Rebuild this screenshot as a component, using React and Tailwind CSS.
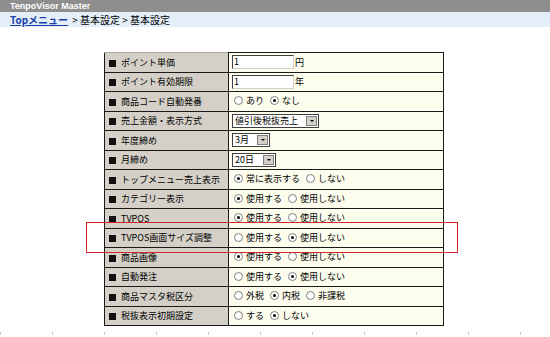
import React from "react";

const font = { fontFamily: '"MS PGothic", "Noto Sans CJK JP", sans-serif' };

function Radio({ checked, label }) {
  return (
    <span className="inline-flex items-center mr-[6px]">
      <span className="relative inline-block w-[9px] h-[9px] rounded-full border border-[#808080] bg-white mr-[3px]">
        {checked && (
          <span className="absolute left-[2px] top-[2px] w-[3px] h-[3px] rounded-full bg-black" />
        )}
      </span>
      <span>{label}</span>
    </span>
  );
}

function TextInput({ value, unit }) {
  return (
    <span className="inline-flex items-center">
      <span className="inline-block w-[62px] h-[14px] bg-white border-t border-l border-t-[#404040] border-l-[#404040] border-r border-b border-r-[#d4d0c8] border-b-[#d4d0c8] leading-[12px] pl-[1px]">
        {value}
      </span>
      <span className="ml-[1px]">{unit}</span>
    </span>
  );
}

function Select({ value, width }) {
  return (
    <span className={`inline-flex items-center h-[14px] bg-white border border-[#404040] ${width}`}>
      <span className="flex-1 pl-[2px] leading-[12px]">{value}</span>
      <span className="w-[11px] h-[10px] mr-[1px] bg-[#d4d0c8] border border-[#808080] flex items-center justify-center">
        <span className="w-0 h-0 border-l-[2px] border-r-[2px] border-t-[2px] border-l-transparent border-r-transparent border-t-black" />
      </span>
    </span>
  );
}

function Pair({ items }) {
  return (
    <span className="pl-[2px]">
      {items.map(([label, checked]) => (
        <Radio key={label} label={label} checked={checked} />
      ))}
    </span>
  );
}

const rows = [
  { label: "ポイント単価", value: <TextInput value="1" unit="円" /> },
  { label: "ポイント有効期限", value: <TextInput value="1" unit="年" /> },
  { label: "商品コード自動発番", value: <Pair items={[["あり", false], ["なし", true]]} /> },
  { label: "売上金額・表示方式", value: <Select value="値引後税抜売上" width="w-[87px]" /> },
  { label: "年度締め", value: <Select value="3月" width="w-[38px]" /> },
  { label: "月締め", value: <Select value="20日" width="w-[44px]" /> },
  { label: "トップメニュー売上表示", value: <Pair items={[["常に表示する", true], ["しない", false]]} /> },
  { label: "カテゴリー表示", value: <Pair items={[["使用する", true], ["使用しない", false]]} /> },
  { label: "TVPOS", value: <Pair items={[["使用する", true], ["使用しない", false]]} /> },
  { label: "TVPOS画面サイズ調整", value: <Pair items={[["使用する", false], ["使用しない", true]]} /> },
  { label: "商品画像", value: <Pair items={[["使用する", true], ["使用しない", false]]} /> },
  { label: "自動発注", value: <Pair items={[["使用する", false], ["使用しない", true]]} /> },
  { label: "商品マスタ税区分", value: <Pair items={[["外税", false], ["内税", true], ["非課税", false]]} /> },
  { label: "税抜表示初期設定", value: <Pair items={[["する", false], ["しない", true]]} /> },
];

const ticks = [0, 52, 104, 156, 208, 260, 312, 364, 416, 468, 520];

export default function App() {
  return (
    <div className="relative w-[550px] h-[337px] bg-white text-[9px] text-black overflow-hidden" style={font}>
      {/* Title bar */}
      <div className="h-[12px] bg-[#8e8e8e] flex items-center pl-[10px]">
        <span className="text-white font-bold text-[9px] leading-none" style={{ fontFamily: '"Liberation Sans", Arial, sans-serif' }}>
          TenpoVisor Master
        </span>
      </div>

      {/* Breadcrumb */}
      <div className="h-[15px] bg-[#e3eef9] flex items-center pl-[10px] text-[10px]">
        <a className="text-[#1a3ea8] underline font-bold">Topメニュー</a>
        <span className="ml-[4px]">&gt; 基本設定 &gt; 基本設定</span>
      </div>

      {/* Settings table */}
      <table className="mt-[25px] ml-[104px] w-[340px] table-fixed border-collapse border border-[#1a1a1a]">
        <colgroup>
          <col className="w-[124px]" />
          <col />
        </colgroup>
        <tbody>
          {rows.map((r) => (
            <tr key={r.label} className="h-[19.5px]">
              <td className="bg-[#d4d0c8] border border-[#1a1a1a] border-t-[#a8a6a0] pl-[4px] leading-none whitespace-nowrap">
                <span className="inline-block w-[7px] h-[7px] bg-[#111] mr-[5px] align-[-1px]" />
                {r.label}
              </td>
              <td className="bg-[#fdfdee] border border-[#1a1a1a] pl-[3px] leading-none whitespace-nowrap">
                {r.value}
              </td>
            </tr>
          ))}
        </tbody>
      </table>

      {/* Ruler ticks */}
      <div className="flex mt-[6px]">
        {ticks.map((t) => (
          <span key={t} className="w-[52px] shrink-0">
            <span className="block w-px h-[3px] bg-[#c8c8c8]" />
          </span>
        ))}
      </div>

      {/* Highlight box */}
      <div className="absolute left-[86px] top-[222px] w-[372px] h-[31px] border-[1.5px] border-[#cf2a2a] pointer-events-none" />
    </div>
  );
}
